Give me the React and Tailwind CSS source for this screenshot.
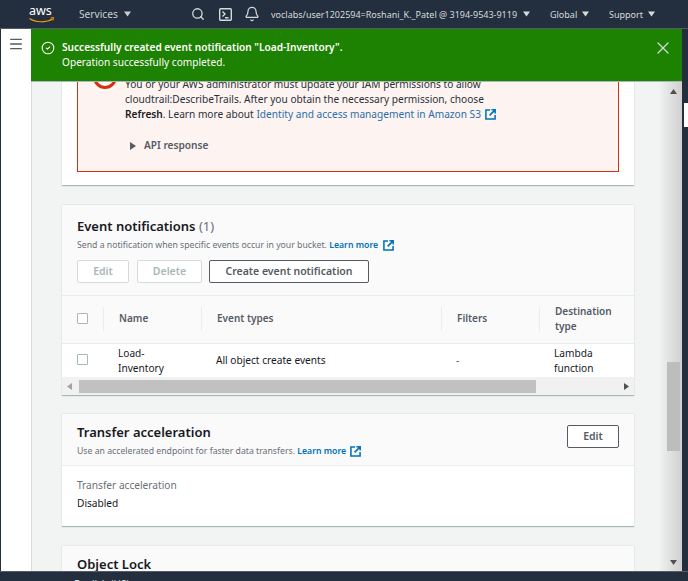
import React from "react";
import { Search, Bell, X, Menu, CircleCheck } from "lucide-react";

const Caret = ({ className = "" }) => (
  <svg width="7" height="6" viewBox="0 0 7 6" className={`shrink-0 ${className}`}>
    <path d="M0 0.500h7L3.500 5.500z" fill="currentColor" />
  </svg>
);

const Ext = ({ className = "" }) => (
  <svg width="11" height="11" viewBox="0 0 12 12" fill="none" className={className} stroke="#0073bb" strokeWidth="1.7">
    <path d="M5.500 1H1v10h10V6.500" />
    <path d="M7 .9h4.100V5M11 1 5 7" />
  </svg>
);

const Check = () => <span className="block w-[11px] h-[11px] border border-[#aab7b8] rounded-[1px] bg-white" />;

const TH = ({ w, children }) => (
  <div className={`flex items-center shrink-0 h-[24px] pl-[15px] whitespace-nowrap border-l border-[#eaeded] ${w}`}>
    {children}
  </div>
);

export default function App() {
  return (
    <div className="w-[688px] h-[581px] overflow-hidden relative bg-[#232f3e] text-[#16191f] text-[10.15px] leading-[15px]" style={{ fontFamily: '"Noto Sans", "Open Sans", sans-serif' }}>
      <header className="h-[29px] bg-[#232f3e] border-b border-[#545b64] flex items-center text-[#d5dbdb] text-[9px] relative z-10">
        <div className="w-[79px] pl-[29px] shrink-0 flex items-start">
          <svg width="26" height="21" viewBox="0 0 26 21">
            <text x="0" y="11" fill="#fff" fontSize="12.5" fontFamily="Noto Sans, sans-serif">aws</text>
            <path d="M0.500 14.500c6 4 17 4.500 23 .6" stroke="#f90" strokeWidth="1.200" fill="none" />
            <path d="M21.500 14l3-.5-.6 3" stroke="#f90" strokeWidth="1" fill="none" />
          </svg>
        </div>
        <span className="w-[39px] text-[10.2px] whitespace-nowrap text-[#c8d0d2]">Services</span>
        <Caret className="ml-[6px] text-[#c8d0d2]" />
        <Search size={14} strokeWidth={2.200} className="ml-[60px] shrink-0 text-[#d5dbdb]" />
        <svg width="13" height="13" viewBox="0 0 13 13" fill="none" stroke="#d5dbdb" strokeWidth="1.400" className="ml-[14px] shrink-0">
          <rect x="0.700" y="0.700" width="11.600" height="11.600" rx="1" />
          <path d="M3.500 3.500 6 6 3.500 8.500M6 9.800h3.500" />
        </svg>
        <Bell size={16} strokeWidth={1.800} className="ml-[12px] shrink-0 text-[#d5dbdb]" />
        <span className="ml-[11px] w-[247px] shrink-0 whitespace-nowrap">voclabs/user1202594=Roshani_K._Patel @ 3194-9543-9119</span>
        <Caret className="ml-[5px]" />
        <span className="ml-[20px] w-[27px] whitespace-nowrap">Global</span>
        <Caret className="ml-[5px]" />
        <span className="ml-[20px] w-[33px] whitespace-nowrap">Support</span>
        <Caret className="ml-[6px]" />
      </header>

      <div className="flex h-[542px]">
        <aside className="w-[30px] shrink-0 ml-[1px] bg-white flex justify-center pt-[7px] text-[#545b64]">
          <Menu size={16} strokeWidth={2} />
        </aside>

        <main className="w-[651px] shrink-0 bg-[#f2f3f3] shadow-[inset_1px_0_0_#d5dbdb] overflow-hidden relative pl-[31px] pr-[48px]">
          <section className="-mt-[10px] h-[167px] bg-white border-b border-[#aab7b8] shadow-[0_0_1px_#aab7b8] px-[15px]">
            <div className="h-[153px] border border-[#d13212] bg-[#fdf3f1] pl-[47px] pt-[57px] relative text-[#2b3138]">
              <span className="absolute left-[15px] top-[45px] w-[24px] h-[24px] rounded-full border-[3px] border-[#d13212]" />
              <p className="whitespace-nowrap">You or your AWS administrator must update your IAM permissions to allow</p>
              <p className="whitespace-nowrap">cloudtrail:DescribeTrails. After you obtain the necessary permission, choose</p>
              <p className="whitespace-nowrap">
                <b className="font-semibold text-[#16191f]">Refresh</b>. Learn more about <span className="text-[#2a6fa8]">Identity and access management in Amazon S3</span>
                <Ext className="inline-block ml-[4px] -mt-[2px]" />
              </p>
              <div className="flex items-center mt-[16px] text-[#545b64] font-semibold">
                <svg width="6" height="8" viewBox="0 0 6 8" className="ml-[5px] mr-[8px]"><path d="M0 0l6 4-6 4z" fill="#545b64" /></svg>
                API response
              </div>
            </div>
          </section>

          <section className="mt-[19px] h-[191px] bg-white border-b border-[#aab7b8] shadow-[0_0_1px_#aab7b8] flex flex-col">
            <div className="h-[91px] bg-[#fafafa] border-b border-[#eaeded] px-[15px] pt-[12px] shrink-0">
              <h2 className="text-[13px] leading-[18px] font-semibold text-[#16191f]">Event notifications <span className="font-normal text-[#687078]">(1)</span></h2>
              <p className="text-[8.7px] leading-[14px] mt-[3px] text-[#687078] flex items-center whitespace-nowrap">
                Send a notification when specific events occur in your bucket.&nbsp;<span className="text-[#0073bb] font-semibold">Learn more</span><Ext className="ml-[5px]" />
              </p>
              <div className="flex mt-[8px] text-[10.5px] font-semibold">
                <div className="w-[52px] h-[23px] border border-[#d5dbdb] rounded-[2px] bg-white text-[#aab7b8] flex items-center justify-center">Edit</div>
                <div className="ml-[8px] w-[65px] h-[23px] border border-[#d5dbdb] rounded-[2px] bg-white text-[#aab7b8] flex items-center justify-center">Delete</div>
                <div className="ml-[7px] w-[160px] h-[23px] border border-[#545b64] rounded-[2px] bg-white text-[#545b64] flex items-center justify-center">Create event notification</div>
              </div>
            </div>
            <div className="h-[48px] bg-[#fafafa] border-b border-[#eaeded] flex items-center pl-[15px] pb-[2px] font-semibold text-[#545b64] text-[10px] shrink-0">
              <div className="w-[26px] flex shrink-0"><Check /></div>
              <TH w="w-[98px]">Name</TH>
              <TH w="w-[240px]">Event types</TH>
              <TH w="w-[98px]">Filters</TH>
              <TH w="w-[70px]"><span>Destination<br />type</span></TH>
            </div>
            <div className="h-[33px] flex pl-[15px] overflow-hidden pt-[2px] shrink-0">
              <div className="w-[26px] shrink-0 pt-[8px]"><Check /></div>
              <div className="w-[98px] shrink-0 pl-[15px]">Load-<br />Inventory</div>
              <div className="w-[240px] shrink-0 pl-[15px] pt-[7px]">All object create events</div>
              <div className="w-[98px] shrink-0 pl-[15px] pt-[7px] text-[#545b64]">-</div>
              <div className="w-[70px] shrink-0 pl-[15px] whitespace-nowrap">Lambda<br />function</div>
            </div>
            <div className="h-[18px] bg-[#f1f1f1] flex items-center shrink-0">
              <svg width="5" height="7" viewBox="0 0 5 7" className="ml-[5px] shrink-0"><path d="M5 0v7L0 3.500z" fill="#a3a3a3" /></svg>
              <div className="ml-[7px] w-[457px] h-[13px] bg-[#c1c1c1]" />
              <svg width="5" height="7" viewBox="0 0 5 7" className="ml-[88px] shrink-0"><path d="M0 0v7l5-3.500z" fill="#505050" /></svg>
            </div>
          </section>

          <section className="mt-[18px] h-[113px] bg-white border-b border-[#aab7b8] shadow-[0_0_1px_#aab7b8] flex flex-col">
            <div className="h-[52px] bg-[#fafafa] border-b border-[#eaeded] px-[15px] pt-[9px] flex justify-between shrink-0">
              <div>
                <h2 className="text-[13px] leading-[18px] font-semibold">Transfer acceleration</h2>
                <p className="text-[8.7px] leading-[14px] mt-[3px] text-[#687078] flex items-center whitespace-nowrap">
                  Use an accelerated endpoint for faster data transfers.&nbsp;<span className="text-[#0073bb] font-semibold">Learn more</span><Ext className="ml-[4px]" />
                </p>
              </div>
              <div className="w-[52px] h-[23px] mt-[2px] border border-[#545b64] rounded-[2px] bg-white text-[#545b64] font-semibold text-[10.5px] flex items-center justify-center">Edit</div>
            </div>
            <div className="px-[15px] pt-[10px] leading-[18px]">
              <div className="text-[#687078]">Transfer acceleration</div>
              <div className="text-[#16191f]">Disabled</div>
            </div>
          </section>

          <section className="mt-[19px] h-[60px] bg-[#fafafa] shadow-[0_0_1px_#aab7b8] px-[15px] pt-[9px]">
            <h2 className="text-[13px] leading-[18px] font-semibold">Object Lock</h2>
          </section>

          <div className="absolute top-0 bottom-0 right-0 w-[24px] bg-linear-to-r from-transparent to-[#cfcfcf]" />
          <svg width="7" height="5" viewBox="0 0 7 5" className="absolute left-[639px] top-[60px]"><path d="M0 5h7L3.500 0z" fill="#505050" /></svg>
          <div className="absolute left-[636px] w-[13px] top-[333px] h-[89px] bg-[#bdbdbd]" />
          <svg width="7" height="5" viewBox="0 0 7 5" className="absolute left-[639px] top-[531px]"><path d="M0 0h7L3.500 5z" fill="#505050" /></svg>

          <div className="absolute left-0 top-0 right-0 h-[53px] bg-[#1d8102] border-b border-[#aab7b8] flex text-white">
            <CircleCheck size={14} strokeWidth={1.800} className="ml-[10px] mt-[12px] shrink-0" />
            <div className="ml-[7px] pt-[11px]">
              <div className="font-semibold">Successfully created event notification "Load-Inventory".</div>
              <div>Operation successfully completed.</div>
            </div>
            <X size={20} strokeWidth={1.500} className="absolute right-[9px] top-[9px] text-[#d5dbdb]" />
          </div>
        </main>
      </div>

      <div className="absolute left-0 right-0 bottom-0 h-[10px] bg-[#232f3e] border-t border-[#545b64] overflow-hidden z-10">
        <span className="absolute left-[74px] top-[5px] text-[10px] text-[#d5dbdb]">English (US)</span>
      </div>
      <div className="absolute right-0 top-[103px] w-[4px] h-[24px] bg-white" />
    </div>
  );
}
